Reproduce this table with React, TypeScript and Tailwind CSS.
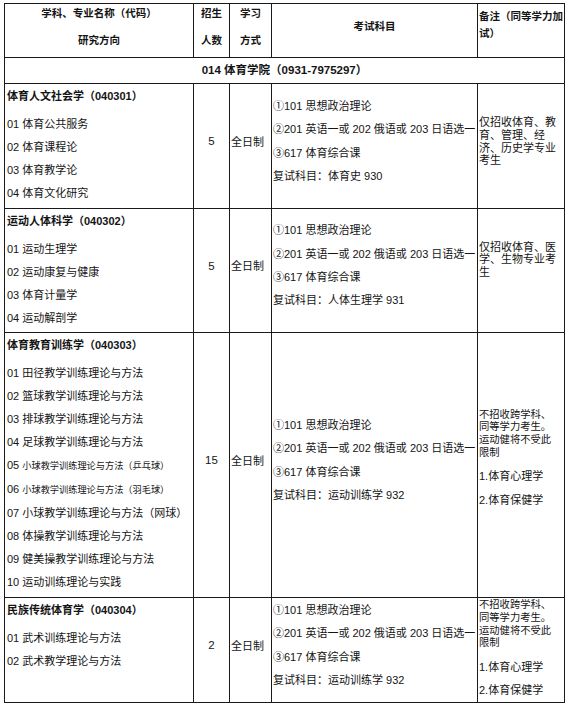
import React from "react";

// ─── Data ─────────────────────────────────────────────────────────────────────
type Item = { no: string; text: string; small?: boolean };

interface Major {
  title: string;
  items: Item[];
  num: string;
  retest: string;
  notes: React.ReactNode;
}

const EXAM = ["①101 思想政治理论", "②201 英语一或 202 俄语或 203 日语选一", "③617 体育综合课"];

const cell = "border-r border-b border-[#1a1a1a]";

function CrossNote() {
  return (
    <div>
      <div className="text-[10.3px] leading-[12.6px] whitespace-nowrap">
        <div>不招收跨学科、</div>
        <div>同等学力考生。</div>
        <div>运动健将不受此</div>
        <div>限制</div>
      </div>
      <div className="mt-[6px] leading-[23.5px] whitespace-nowrap">
        <div>1.体育心理学</div>
        <div>2.体育保健学</div>
      </div>
    </div>
  );
}

const MAJORS: Major[] = [
  {
    title: "体育人文社会学（040301）",
    items: [
      { no: "01", text: "体育公共服务" },
      { no: "02", text: "体育课程论" },
      { no: "03", text: "体育教学论" },
      { no: "04", text: "体育文化研究" },
    ],
    num: "5",
    retest: "复试科目：体育史 930",
    notes: (
      <div className="leading-[12.7px] whitespace-nowrap pb-[9px]">
        <div>仅招收体育、教</div>
        <div>育、管理、经</div>
        <div>济、历史学专业</div>
        <div>考生</div>
      </div>
    ),
  },
  {
    title: "运动人体科学（040302）",
    items: [
      { no: "01", text: "运动生理学" },
      { no: "02", text: "运动康复与健康" },
      { no: "03", text: "体育计量学" },
      { no: "04", text: "运动解剖学" },
    ],
    num: "5",
    retest: "复试科目：人体生理学 931",
    notes: (
      <div className="leading-[12.5px] whitespace-nowrap pb-[22px]">
        <div>仅招收体育、医</div>
        <div>学、生物专业考</div>
        <div>生</div>
      </div>
    ),
  },
  {
    title: "体育教育训练学（040303）",
    items: [
      { no: "01", text: "田径教学训练理论与方法" },
      { no: "02", text: "篮球教学训练理论与方法" },
      { no: "03", text: "排球教学训练理论与方法" },
      { no: "04", text: "足球教学训练理论与方法" },
      { no: "05", text: "小球教学训练理论与方法（乒乓球）", small: true },
      { no: "06", text: "小球教学训练理论与方法（羽毛球）", small: true },
      { no: "07", text: "小球教学训练理论与方法（网球）" },
      { no: "08", text: "体操教学训练理论与方法" },
      { no: "09", text: "健美操教学训练理论与方法" },
      { no: "10", text: "运动训练理论与实践" },
    ],
    num: "15",
    retest: "复试科目：运动训练学 932",
    notes: (
      <div className="pb-[9px]">
        <CrossNote />
      </div>
    ),
  },
  {
    title: "民族传统体育学（040304）",
    items: [
      { no: "01", text: "武术训练理论与方法" },
      { no: "02", text: "武术教学理论与方法" },
    ],
    num: "2",
    retest: "复试科目：运动训练学 932",
    notes: (
      <div className="pt-[2px]">
        <CrossNote />
      </div>
    ),
  },
];

// ─── Main ─────────────────────────────────────────────────────────────────────
export default function App() {
  return (
    <div className="min-h-screen bg-white pt-[3px] pl-[4px] text-[11px] text-[#141414] font-[family-name:'Liberation_Sans','Noto_Sans_CJK_SC',sans-serif]">
      <div className="grid w-[561px] grid-cols-[189px_36px_42px_206px_87px] grid-rows-[54px_26px_125px_124px_265px_105px] border-l border-t border-[#1a1a1a]">
        {/* header */}
        <div className={`${cell} flex flex-col items-center font-bold text-[10.5px] leading-[19px]`}>
          <div>学科、专业名称（代码）</div>
          <div className="mt-[8px]">研究方向</div>
        </div>
        <div className={`${cell} flex flex-col items-center font-bold text-[10.5px] leading-[19px]`}>
          <div>招生</div>
          <div className="mt-[8px]">人数</div>
        </div>
        <div className={`${cell} flex flex-col items-center font-bold text-[10.5px] leading-[19px]`}>
          <div>学习</div>
          <div className="mt-[8px]">方式</div>
        </div>
        <div className={`${cell} flex items-center justify-center pb-[8px] font-bold text-[10.5px]`}>
          考试科目
        </div>
        <div className={`${cell} pt-[4px] pl-[1px] font-bold text-[10.5px] leading-[16.5px] whitespace-nowrap`}>
          <div>备注（同等学力加</div>
          <div>试）</div>
        </div>

        {/* department */}
        <div className={`${cell} col-span-5 flex items-center justify-center font-bold text-[11.5px]`}>
          014 体育学院（0931-7975297）
        </div>

        {MAJORS.map((m) => (
          <React.Fragment key={m.title}>
            <div className={`${cell} flex flex-col pt-[1px] pl-[2px]`}>
              <div className="font-bold leading-[23px]">{m.title}</div>
              <div className="mt-[5px] leading-[23px] whitespace-nowrap">
                {m.items.map((it) => (
                  <div key={it.no}>
                    {it.no}{" "}
                    {it.small ? <span className="text-[9.2px]">{it.text}</span> : it.text}
                  </div>
                ))}
              </div>
            </div>
            <div className={`${cell} flex items-center justify-center pb-[8px] text-[11.5px]`}>{m.num}</div>
            <div className={`${cell} flex items-center pb-[8px] pl-[1px] whitespace-nowrap`}>全日制</div>
            <div className={`${cell} flex flex-col justify-center pb-[9px] pl-[1px] leading-[23.3px] whitespace-nowrap`}>
              {EXAM.map((e) => (
                <div key={e}>{e}</div>
              ))}
              <div>{m.retest}</div>
            </div>
            <div className={`${cell} flex flex-col justify-center pl-[1px] overflow-hidden`}>{m.notes}</div>
          </React.Fragment>
        ))}
      </div>
    </div>
  );
}
